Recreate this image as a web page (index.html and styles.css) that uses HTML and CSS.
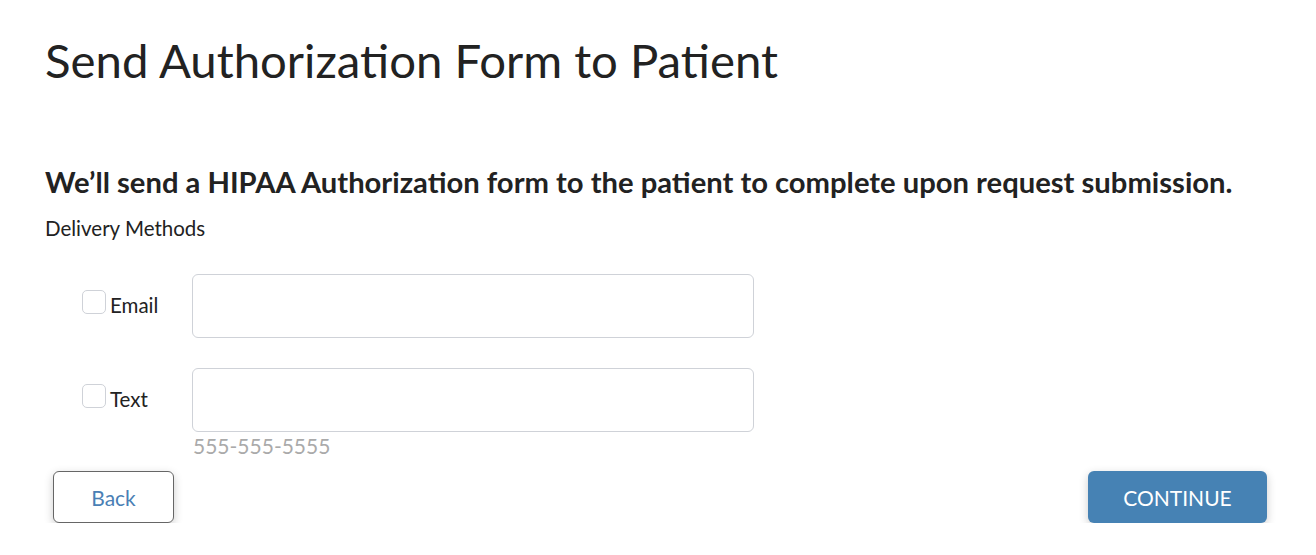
FILE: index.html
```html
<!DOCTYPE html>
<html>
<head>
<meta charset="utf-8">
<link rel="stylesheet" href="styles.css">
</head>
<body>
<div class="page">
  <h1 class="title">Send Authorization Form to Patient</h1>
  <h2 class="subtitle">We’ll send a HIPAA Authorization form to the patient to complete upon request submission.</h2>
  <div class="section-label">Delivery Methods</div>
  <div class="methods">
    <div class="method">
      <label class="check"><span class="box"></span><span class="check-text">Email</span></label>
      <div class="field"><input class="input" type="text"></div>
    </div>
    <div class="method">
      <label class="check"><span class="box"></span><span class="check-text">Text</span></label>
      <div class="field"><input class="input" type="text"><div class="hint">555-555-5555</div></div>
    </div>
  </div>
  <div class="actions">
    <button class="btn btn-back">Back</button>
    <button class="btn btn-continue">CONTINUE</button>
  </div>
</div>
</body>
</html>
```
FILE: styles.css
```css
html, body { margin: 0; padding: 0; background: #fff; }
body { font-family: "Lato", "Liberation Sans", sans-serif; color: #222; }
.page { padding: 0 49px 0 45px; }
.title { margin: 0; padding-top: 32px; font-size: 47.3px; font-weight: 400; line-height: 56px; color: #222; }
.subtitle { margin: 74px 0 0; font-size: 29.2px; font-weight: 700; line-height: 40px; color: #222; }
.section-label { margin-top: 14px; font-size: 20.5px; line-height: 24px; color: #222; }
.methods { margin-top: 34px; display: flex; flex-direction: column; gap: 30px; padding-left: 37px; }
.method { display: flex; align-items: flex-start; }
.check { display: flex; align-items: flex-start; width: 110px; margin-top: 16px; }
.box { width: 22px; height: 22px; border: 1px solid #cfd2d8; border-radius: 5px; box-sizing: content-box; flex: none; }
.check-text { margin: 3px 0 0 4px; font-size: 20.5px; line-height: 24px; color: #222; }
.field { display: flex; flex-direction: column; }
.input { width: 562px; height: 64px; box-sizing: border-box; border: 1px solid #cfd2d8; border-radius: 6px; background: #fff; }
.hint { margin-top: 2px; padding-left: 1px; font-size: 21px; line-height: 24px; color: #aaa; }
.actions { display: flex; justify-content: space-between; padding: 13px 0 0 8px; }
.btn { height: 52px; border-radius: 6px; font-family: inherit; font-size: 21px; cursor: pointer; box-shadow: 0 3px 10px rgba(0,0,0,0.2); }
.btn-back { width: 121px; background: #fff; border: 1px solid #666; color: #4a7fb5; }
.btn-continue { width: 179px; background: #4682b4; border: none; color: #fff; }
```
